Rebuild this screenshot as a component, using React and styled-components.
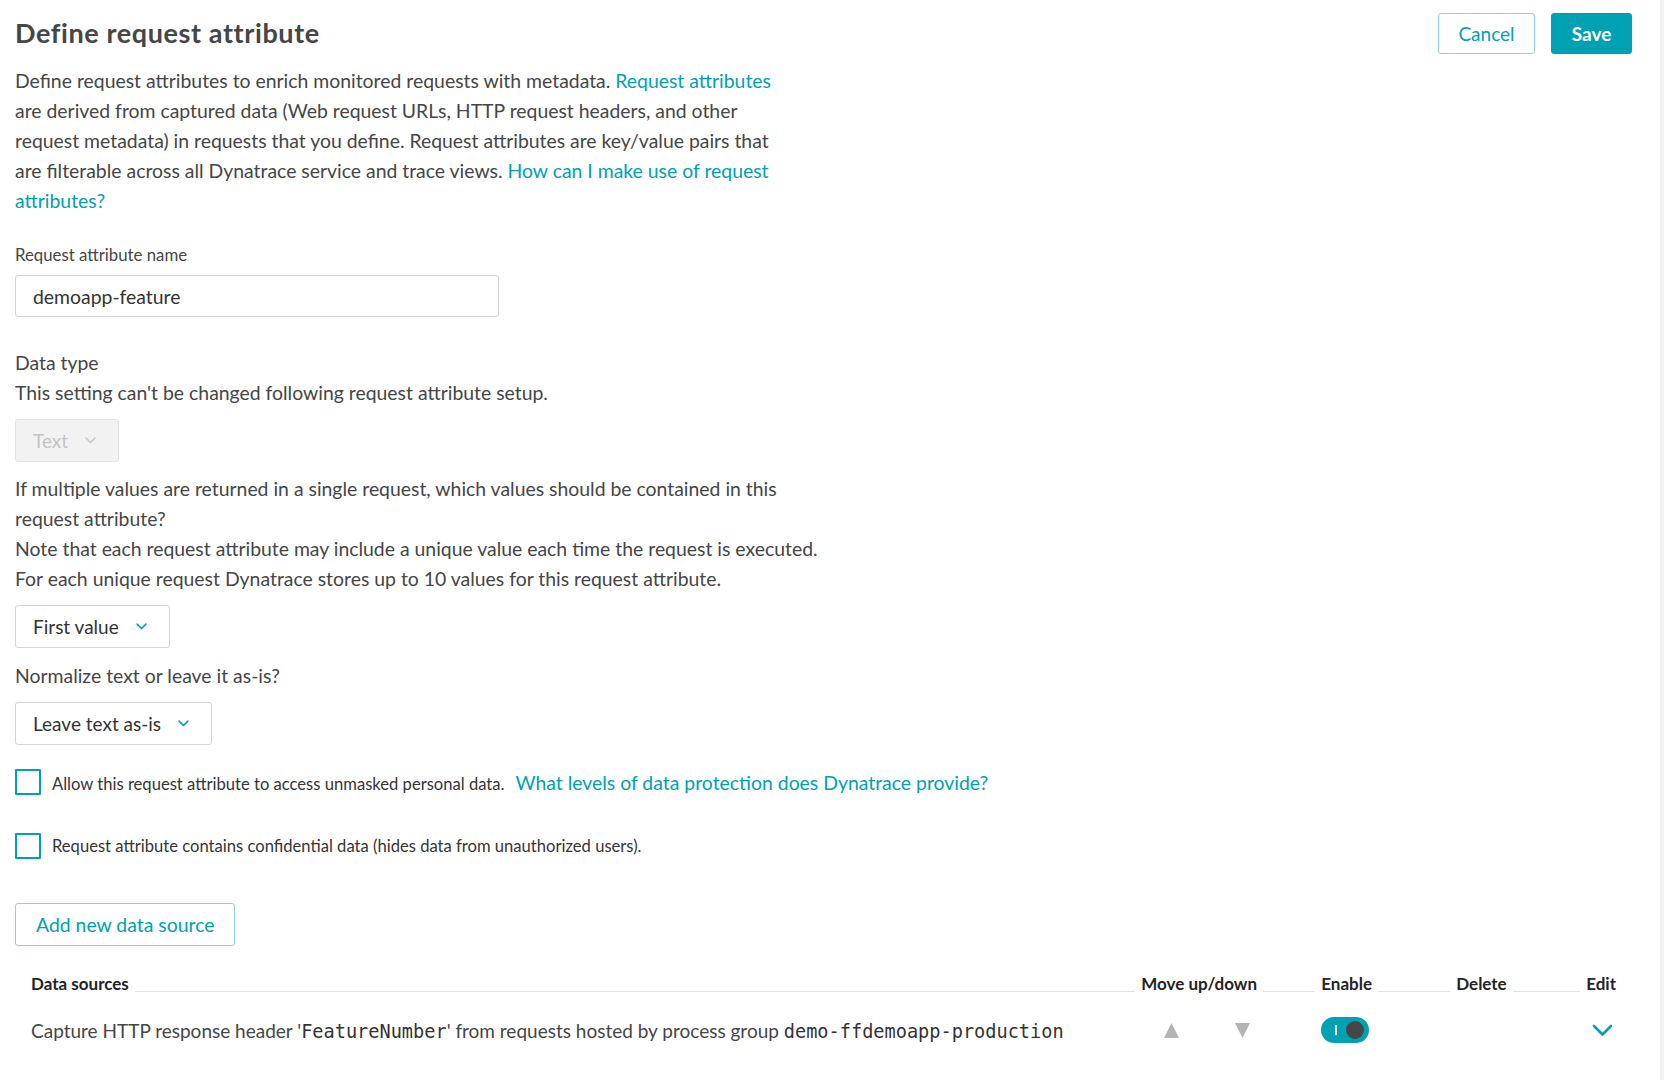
import React from 'react';
import styled, { createGlobalStyle } from 'styled-components';

const Colors = {
  teal: '#00a1b2',
  tealLight: '#8fd1d9',
  text: '#454646',
  dark: '#242424',
  border: '#d4d4d4',
  rule: '#e2e2e2',
  disabledBg: '#f2f2f2',
  disabledText: '#c4c4c4',
};

const GlobalStyle = createGlobalStyle`
  html, body {
    margin: 0;
    padding: 0;
    background: #fff;
  }
  body {
    font-family: Lato, "Open Sans", sans-serif;
    color: ${Colors.text};
  }
  * {
    box-sizing: border-box;
  }
`;

const Chevron = ({ color = Colors.teal, size = 11 }) => (
  <svg width={size} height={size * 0.6} viewBox="0 0 10 6" fill="none">
    <polyline points="1,1 5,5 9,1" stroke={color} strokeWidth="1.4" strokeLinecap="round" strokeLinejoin="round" />
  </svg>
);

const Select = ({ value, disabled }) => (
  <SelectBox disabled={disabled}>
    <span>{value}</span>
    <Chevron color={disabled ? '#c8c8c8' : Colors.teal} />
  </SelectBox>
);

const Checkbox = ({ children }) => (
  <CheckRow>
    <Box />
    <CheckLabel>{children}</CheckLabel>
  </CheckRow>
);

const App = () => {
  return (
    <React.Fragment>
      <GlobalStyle />
      <Page>
        <Main>
          <Header>
            <Title>Define request attribute</Title>
            <Actions>
              <OutlineButton>Cancel</OutlineButton>
              <PrimaryButton>Save</PrimaryButton>
            </Actions>
          </Header>

          <Intro>
            Define request attributes to enrich monitored requests with metadata.{' '}
            <Link>Request attributes</Link> are derived from captured data (Web request URLs, HTTP
            request headers, and other request metadata) in requests that you define. Request
            attributes are key/value pairs that are filterable across all Dynatrace service and
            trace views. <Link>How can I make use of request attributes?</Link>
          </Intro>

          <FieldLabel>Request attribute name</FieldLabel>
          <Input>demoapp-feature</Input>

          <Text top={31}>
            Data type
            <br />
            This setting can't be changed following request attribute setup.
          </Text>
          <Select value="Text" disabled />

          <Text top={12}>
            If multiple values are returned in a single request, which values should be contained in
            this request attribute?
            <br />
            Note that each request attribute may include a unique value each time the request is
            executed.
            <br />
            For each unique request Dynatrace stores up to 10 values for this request attribute.
          </Text>
          <Select value="First value" />

          <Text top={13}>Normalize text or leave it as-is?</Text>
          <Select value="Leave text as-is" />

          <Checks>
            <Checkbox>
              Allow this request attribute to access unmasked personal data.
              <InlineLink>What levels of data protection does Dynatrace provide?</InlineLink>
            </Checkbox>
            <Checkbox>
              Request attribute contains confidential data (hides data from unauthorized users).
            </Checkbox>
          </Checks>

          <AddButton>Add new data source</AddButton>

          <Table>
            <HeadCell>
              <HeadLabel>Data sources</HeadLabel>
              <Rule />
            </HeadCell>
            <HeadCell>
              <HeadLabel>Move up/down</HeadLabel>
              <Rule />
            </HeadCell>
            <HeadCell>
              <HeadLabel>Enable</HeadLabel>
              <Rule />
            </HeadCell>
            <HeadCell>
              <HeadLabel>Delete</HeadLabel>
              <Rule />
            </HeadCell>
            <HeadCell>
              <HeadLabel>Edit</HeadLabel>
            </HeadCell>

            <Cell>
              <span>
                Capture HTTP response header '<Mono>FeatureNumber</Mono>' from requests hosted by
                process group <Mono>demo-ffdemoapp-production</Mono>
              </span>
            </Cell>
            <Cell>
              <Arrows>
                <svg width="17" height="17" viewBox="0 0 17 17">
                  <polygon points="8.5,1 16,16 1,16" fill="#b3b3b3" />
                </svg>
                <svg width="17" height="17" viewBox="0 0 17 17">
                  <polygon points="1,1 16,1 8.5,16" fill="#b3b3b3" />
                </svg>
              </Arrows>
            </Cell>
            <Cell>
              <Toggle>
                <ToggleMark />
                <Knob />
              </Toggle>
            </Cell>
            <Cell />
            <Cell>
              <EditIcon>
                <svg width="21" height="13" viewBox="0 0 21 13" fill="none">
                  <polyline points="2,2 10.5,10.5 19,2" stroke={Colors.teal} strokeWidth="2.6" strokeLinecap="round" strokeLinejoin="round" />
                </svg>
              </EditIcon>
            </Cell>
          </Table>
        </Main>
        <ScrollTrack />
      </Page>
    </React.Fragment>
  );
};
export default App;

const Page = styled.div`
  display: flex;
  min-height: 100vh;
`;

const Main = styled.div`
  flex: 1;
  padding: 13px 28px 0 15px;
  display: flex;
  flex-direction: column;
  align-items: flex-start;
`;

const ScrollTrack = styled.div`
  width: 4px;
  background: #f1f1f1;
`;

const Header = styled.div`
  width: 100%;
  display: flex;
  justify-content: space-between;
  align-items: flex-start;
`;

const Title = styled.h1`
  margin: 4px 0 0;
  font-size: 27px;
  line-height: 32px;
  letter-spacing: 0.6px;
  font-weight: 700;
  color: ${Colors.text};
`;

const Actions = styled.div`
  display: flex;
  gap: 16px;
`;

const ButtonBase = styled.button`
  height: 41px;
  border-radius: 3px;
  font-family: Lato, sans-serif;
  font-size: 19px;
  padding: 0 19px;
  cursor: pointer;
`;

const OutlineButton = styled(ButtonBase)`
  width: 97px;
  background: #fff;
  border: 1px solid ${Colors.tealLight};
  color: ${Colors.teal};
`;

const PrimaryButton = styled(ButtonBase)`
  width: 81px;
  background: ${Colors.teal};
  border: 1px solid ${Colors.teal};
  color: #fff;
  font-weight: 700;
`;

const Intro = styled.p`
  margin: 12px 0 0;
  max-width: 768px;
  font-size: 19.4px;
  line-height: 30px;
`;

const Link = styled.a`
  color: ${Colors.teal};
  text-decoration: none;
`;

const FieldLabel = styled.label`
  margin-top: 29px;
  font-size: 16.8px;
  line-height: 20px;
`;

const Input = styled.div`
  margin-top: 10px;
  width: 484px;
  height: 42px;
  border: 1px solid ${Colors.border};
  border-radius: 3px;
  padding: 0 17px;
  display: flex;
  align-items: center;
  font-size: 19.4px;
  color: #333;
`;

const Text = styled.p`
  margin: ${(p) => p.top}px 0 0;
  font-size: 19.4px;
  line-height: 30px;
  max-width: 815px;
`;

const SelectBox = styled.div`
  margin-top: 11px;
  height: 43px;
  display: inline-flex;
  align-items: center;
  gap: 17px;
  padding: 0 22px 0 17px;
  border: 1px solid ${(p) => (p.disabled ? '#e2e2e2' : Colors.border)};
  border-radius: 3px;
  background: ${(p) => (p.disabled ? Colors.disabledBg : '#fff')};
  color: ${(p) => (p.disabled ? Colors.disabledText : '#333')};
  font-size: 19px;
`;

const Checks = styled.div`
  margin-top: 24px;
  display: flex;
  flex-direction: column;
  gap: 38px;
`;

const CheckRow = styled.div`
  display: flex;
  align-items: center;
  gap: 11px;
`;

const Box = styled.span`
  width: 26px;
  height: 26px;
  border: 2.5px solid ${Colors.teal};
  border-radius: 1px;
  flex: none;
`;

const CheckLabel = styled.span`
  font-size: 16.6px;
  color: #353535;
`;

const InlineLink = styled(Link)`
  font-size: 19.4px;
  margin-left: 11px;
`;

const AddButton = styled(ButtonBase)`
  margin-top: 44px;
  height: 43px;
  padding: 0 20px;
  font-size: 19.4px;
  background: #fff;
  border: 1px solid ${Colors.tealLight};
  color: ${Colors.teal};
`;

const Table = styled.div`
  margin-top: 25px;
  width: 100%;
  padding: 0 16px;
  display: grid;
  grid-template-columns: 1fr 180px 135px 130px auto;
`;

const HeadCell = styled.div`
  display: flex;
  align-items: flex-end;
  height: 24px;
`;

const HeadLabel = styled.span`
  font-size: 17px;
  line-height: 22px;
  font-weight: 700;
  color: ${Colors.dark};
  white-space: nowrap;
`;

const Rule = styled.span`
  flex: 1;
  height: 1px;
  background: ${Colors.rule};
  margin: 0 6px 3px;
`;

const Cell = styled.div`
  height: 70px;
  display: flex;
  align-items: center;
  font-size: 19px;
  color: ${Colors.text};
  white-space: nowrap;
`;

const Mono = styled.span`
  font-family: "DejaVu Sans Mono", "Liberation Mono", monospace;
  font-size: 18.6px;
  color: #333;
`;

const Arrows = styled.div`
  display: flex;
  gap: 54px;
  padding-left: 22px;
`;

const Toggle = styled.div`
  position: relative;
  width: 48px;
  height: 26px;
  border-radius: 13px;
  background: ${Colors.teal};
`;

const ToggleMark = styled.span`
  position: absolute;
  left: 14px;
  top: 8px;
  width: 2px;
  height: 10px;
  background: #fff;
`;

const Knob = styled.span`
  position: absolute;
  right: 5px;
  top: 4px;
  width: 18px;
  height: 18px;
  border-radius: 50%;
  background: ${Colors.text};
`;

const EditIcon = styled.div`
  width: 29px;
  padding-left: 4px;
  display: flex;
  justify-content: center;
`;
